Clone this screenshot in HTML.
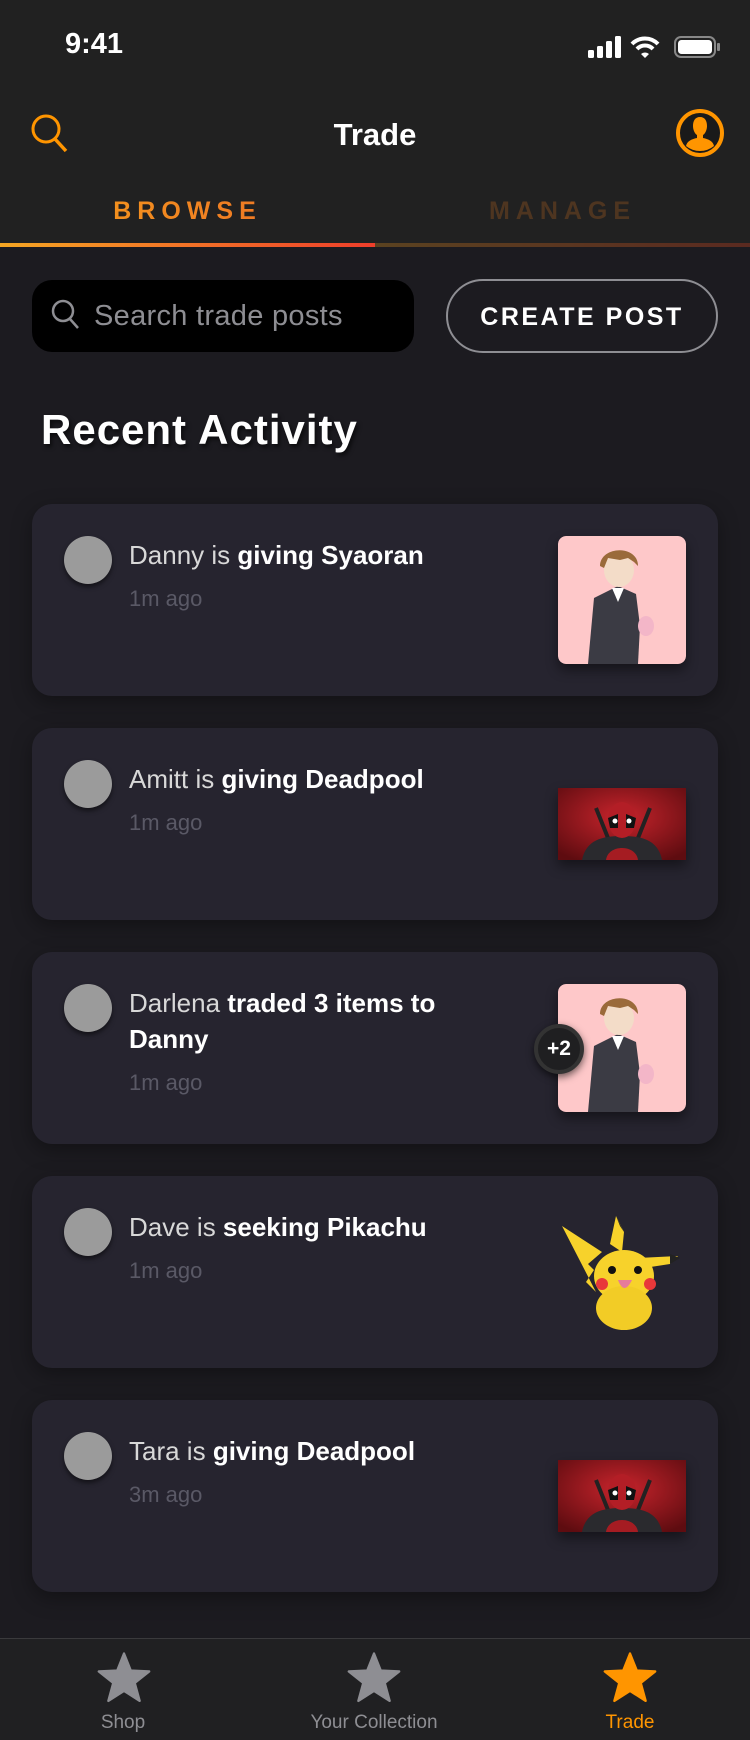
<!DOCTYPE html>
<html><head><meta charset="utf-8"><style>
*{margin:0;padding:0;box-sizing:border-box}
body{width:750px;height:1740px;background:#1c1b20;font-family:"Liberation Sans",sans-serif;position:relative;overflow:hidden;color:#fff}
.abs{position:absolute}
.hdr{left:0;top:0;width:750px;height:246px;background:#212121}
.card{position:absolute;left:32px;width:686px;height:192px;background:#26242f;border-radius:20px;box-shadow:0 6px 20px rgba(0,0,0,.35)}
.av{position:absolute;left:32px;top:32px;width:48px;height:48px;border-radius:50%;background:#9b9b9b;box-shadow:0 3px 5px rgba(0,0,0,.5);overflow:hidden}
.txt{position:absolute;left:97px;top:33px;font-size:26px;line-height:36px;color:#d8d8d8;width:380px}
.txt b{color:#fff;font-weight:600}
.time{position:absolute;left:97px;font-size:22px;color:#5a5966}
.img{position:absolute;left:526px;width:128px;box-shadow:0 6px 12px rgba(0,0,0,.45)}
.tab{position:absolute;top:1680px;font-size:19px;color:#8e8e93;text-align:center;width:200px}
</style></head><body>
<div class="abs hdr"></div>
<div class="abs" style="left:65px;top:28px;font-size:29px;font-weight:600">9:41</div>
<svg class="abs" style="left:586px;top:34px" width="135" height="26" viewBox="0 0 135 26">
<rect x="2" y="16" width="6" height="8" rx="1.5" fill="#fff"/><rect x="11" y="12" width="6" height="12" rx="1.5" fill="#fff"/><rect x="20" y="7" width="6" height="17" rx="1.5" fill="#fff"/><rect x="29" y="2" width="6" height="22" rx="1.5" fill="#fff"/>
<path d="M46 10 A18 18 0 0 1 72 10" stroke="#fff" stroke-width="4" fill="none"/><path d="M51 15 A11 11 0 0 1 67 15" stroke="#fff" stroke-width="4" fill="none"/><path d="M55 20 L59 24 L63 20 A6 6 0 0 0 55 20Z" fill="#fff"/>
<rect x="89" y="3" width="40" height="20" rx="6" stroke="#888" stroke-width="2" fill="none"/><rect x="92" y="6" width="34" height="14" rx="3.5" fill="#fff"/><rect x="131" y="9" width="3" height="8" rx="1" fill="#888"/>
</svg>
<svg class="abs" style="left:30px;top:113px" width="42" height="42" viewBox="0 0 42 42"><circle cx="16" cy="16" r="13" stroke="#ff9500" stroke-width="3" fill="none"/><line x1="25" y1="26" x2="36" y2="38" stroke="#ff9500" stroke-width="3.5"/></svg>
<div class="abs" style="left:0;width:750px;top:117px;text-align:center;font-size:31px;font-weight:600">Trade</div>
<svg class="abs" style="left:675px;top:108px" width="50" height="50" viewBox="0 0 50 50"><circle cx="25" cy="25" r="22" fill="#1a1a1a" stroke="#ff9500" stroke-width="4"/><path d="M25 9c-5 0-7 4-7 9 0 4 2 8 4 9v3c-5 1-10 3-11 8a22 22 0 0 0 28 0c-1-5-6-7-11-8v-3c2-1 4-5 4-9 0-5-2-9-7-9z" fill="#ff9500"/></svg>
<div class="abs" style="left:0;width:375px;top:197px;text-align:center;font-size:25px;font-weight:700;letter-spacing:6px;background:linear-gradient(90deg,#f5a01a,#ec6a28);-webkit-background-clip:text;color:transparent">BROWSE</div>
<div class="abs" style="left:375px;width:375px;top:197px;text-align:center;font-size:25px;font-weight:700;letter-spacing:6px;color:#4e3520">MANAGE</div>
<div class="abs" style="left:0;top:243px;width:375px;height:4px;background:linear-gradient(90deg,#f5a623,#ee3e2b)"></div>
<div class="abs" style="left:375px;top:243px;width:375px;height:4px;background:linear-gradient(90deg,#5a4220,#5a2a20)"></div>
<div class="abs" style="left:32px;top:280px;width:382px;height:72px;background:#000;border-radius:20px"></div>
<svg class="abs" style="left:50px;top:298px" width="32" height="34" viewBox="0 0 32 34"><circle cx="13" cy="13" r="10" stroke="#8e8e93" stroke-width="2.5" fill="none"/><line x1="20" y1="21" x2="28" y2="30" stroke="#8e8e93" stroke-width="2.5"/></svg>
<div class="abs" style="left:94px;top:300px;font-size:29px;color:#8e8e93;letter-spacing:0.3px">Search trade posts</div>
<div class="abs" style="left:446px;top:279px;width:272px;height:74px;border:2px solid #8e8e93;border-radius:37px;text-align:center;line-height:72px;font-size:25px;font-weight:700;letter-spacing:2.5px">CREATE POST</div>
<div class="abs" style="left:41px;top:406px;font-size:42px;font-weight:700;letter-spacing:1px;text-shadow:2px 3px 4px rgba(0,0,0,.6)">Recent Activity</div>

<div class="card" style="top:504px"><div class="av"></div><div class="txt">Danny is <b>giving Syaoran</b></div><div class="time" style="top:82px">1m ago</div>
<svg class="img" style="top:32px;border-radius:8px" width="128" height="128" viewBox="0 0 128 128"><rect width="128" height="128" rx="8" fill="#fec8c9"/><path d="M36 62 L60 50 L78 58 L82 90 L80 128 L30 128 Z" fill="#3b3b44"/><path d="M54 52 L60 66 L66 52Z" fill="#fff"/><ellipse cx="61" cy="34" rx="15" ry="17" fill="#f3dcc8"/><path d="M42 30 C42 10 80 8 80 30 L76 26 L70 22 L62 24 L50 22 L46 32Z" fill="#9a6a3a"/><ellipse cx="88" cy="90" rx="8" ry="10" fill="#f3b6c8"/></svg></div>

<div class="card" style="top:728px"><div class="av"></div><div class="txt">Amitt is <b>giving Deadpool</b></div><div class="time" style="top:82px">1m ago</div>
<svg class="img" style="top:60px" width="128" height="72" viewBox="0 0 128 72"><defs><radialGradient id="r" cx=".5" cy=".4" r=".7"><stop offset="0" stop-color="#c8242c"/><stop offset="1" stop-color="#5e0c10"/></radialGradient></defs><rect width="128" height="72" fill="url(#r)"/><line x1="38" y1="20" x2="54" y2="60" stroke="#222" stroke-width="4"/><line x1="92" y1="20" x2="76" y2="60" stroke="#222" stroke-width="4"/><path d="M24 72 C28 52 44 48 64 48 C84 48 100 52 104 72Z" fill="#2a2a2e"/><path d="M48 72 C50 56 78 56 80 72Z" fill="#a51c22"/><ellipse cx="64" cy="32" rx="14" ry="18" fill="#b31e26"/><path d="M50 30 L60 26 L60 40 L52 40Z M78 30 L68 26 L68 40 L76 40Z" fill="#111"/><circle cx="57" cy="33" r="2.5" fill="#fff"/><circle cx="71" cy="33" r="2.5" fill="#fff"/></svg></div>

<div class="card" style="top:952px"><div class="av"></div><div class="txt">Darlena <b>traded 3 items to Danny</b></div><div class="time" style="top:118px">1m ago</div>
<svg class="img" style="top:32px;border-radius:8px" width="128" height="128" viewBox="0 0 128 128"><rect width="128" height="128" rx="8" fill="#fec8c9"/><path d="M36 62 L60 50 L78 58 L82 90 L80 128 L30 128 Z" fill="#3b3b44"/><path d="M54 52 L60 66 L66 52Z" fill="#fff"/><ellipse cx="61" cy="34" rx="15" ry="17" fill="#f3dcc8"/><path d="M42 30 C42 10 80 8 80 30 L76 26 L70 22 L62 24 L50 22 L46 32Z" fill="#9a6a3a"/><ellipse cx="88" cy="90" rx="8" ry="10" fill="#f3b6c8"/></svg>
<div class="abs" style="left:502px;top:72px;width:50px;height:50px;border-radius:50%;background:#1f1f21;border:4px solid #333;box-shadow:0 3px 8px rgba(0,0,0,.6);text-align:center;line-height:42px;font-size:21px;font-weight:600">+2</div></div>

<div class="card" style="top:1176px"><div class="av"></div><div class="txt">Dave is <b>seeking Pikachu</b></div><div class="time" style="top:82px">1m ago</div>
<svg class="abs" style="left:526px;top:36px" width="128" height="120" viewBox="0 0 128 120"><path d="M4 14 L44 40 L30 52 L36 58 L28 70 L38 80Z" fill="#f7d22b"/><path d="M52 32 L58 4 L66 20 L64 40Z" fill="#f7d22b"/><path d="M58 4 L66 20 L62 14Z" fill="#222"/><path d="M80 46 L120 44 L112 52 L86 56Z" fill="#f7d22b"/><path d="M112 42 L122 46 L112 52Z" fill="#222"/><ellipse cx="66" cy="64" rx="30" ry="26" fill="#f7d22b"/><ellipse cx="66" cy="96" rx="28" ry="22" fill="#f2cc26"/><circle cx="54" cy="58" r="4" fill="#111"/><circle cx="80" cy="58" r="4" fill="#111"/><circle cx="44" cy="72" r="6" fill="#e8383a"/><circle cx="92" cy="72" r="6" fill="#e8383a"/><path d="M60 68 Q66 84 74 68Z" fill="#e67c9a"/></svg></div>

<div class="card" style="top:1400px"><div class="av"></div><div class="txt">Tara is <b>giving Deadpool</b></div><div class="time" style="top:82px">3m ago</div>
<svg class="img" style="top:60px" width="128" height="72" viewBox="0 0 128 72"><rect width="128" height="72" fill="url(#r)"/><line x1="38" y1="20" x2="54" y2="60" stroke="#222" stroke-width="4"/><line x1="92" y1="20" x2="76" y2="60" stroke="#222" stroke-width="4"/><path d="M24 72 C28 52 44 48 64 48 C84 48 100 52 104 72Z" fill="#2a2a2e"/><path d="M48 72 C50 56 78 56 80 72Z" fill="#a51c22"/><ellipse cx="64" cy="32" rx="14" ry="18" fill="#b31e26"/><path d="M50 30 L60 26 L60 40 L52 40Z M78 30 L68 26 L68 40 L76 40Z" fill="#111"/><circle cx="57" cy="33" r="2.5" fill="#fff"/><circle cx="71" cy="33" r="2.5" fill="#fff"/></svg></div>

<div class="abs" style="left:0;top:1638px;width:750px;height:102px;background:#202022;border-top:1px solid #3a3a3c"></div>
<svg class="abs" style="left:96px;top:1651px" width="56" height="54" viewBox="0 0 24 23"><path d="M12 1 L14.9 8.3 L22.8 8.7 L16.6 13.6 L18.7 21.3 L12 17 L5.3 21.3 L7.4 13.6 L1.2 8.7 L9.1 8.3Z" fill="#8e8e93" stroke="#8e8e93" stroke-linejoin="round" stroke-width="1"/></svg>
<svg class="abs" style="left:346px;top:1651px" width="56" height="54" viewBox="0 0 24 23"><path d="M12 1 L14.9 8.3 L22.8 8.7 L16.6 13.6 L18.7 21.3 L12 17 L5.3 21.3 L7.4 13.6 L1.2 8.7 L9.1 8.3Z" fill="#8e8e93" stroke="#8e8e93" stroke-linejoin="round" stroke-width="1"/></svg>
<svg class="abs" style="left:602px;top:1651px" width="56" height="54" viewBox="0 0 24 23"><path d="M12 1 L14.9 8.3 L22.8 8.7 L16.6 13.6 L18.7 21.3 L12 17 L5.3 21.3 L7.4 13.6 L1.2 8.7 L9.1 8.3Z" fill="#ff9500" stroke="#ff9500" stroke-linejoin="round" stroke-width="1"/></svg>
<div class="tab" style="left:23px;top:1712px">Shop</div>
<div class="tab" style="left:274px;top:1712px">Your Collection</div>
<div class="tab" style="left:530px;top:1712px;color:#ff9500">Trade</div>
</body></html>
